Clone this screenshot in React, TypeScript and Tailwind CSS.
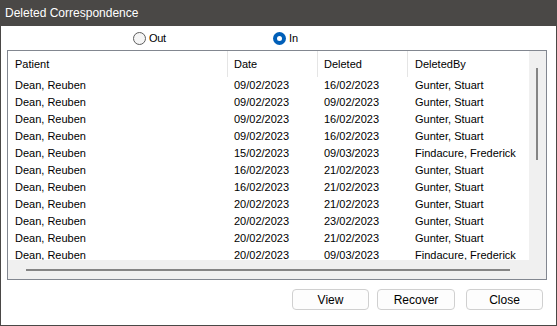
import React from "react";

const rows: [string, string, string, string][] = [
  ["Dean, Reuben", "09/02/2023", "16/02/2023", "Gunter, Stuart"],
  ["Dean, Reuben", "09/02/2023", "09/02/2023", "Gunter, Stuart"],
  ["Dean, Reuben", "09/02/2023", "16/02/2023", "Gunter, Stuart"],
  ["Dean, Reuben", "09/02/2023", "16/02/2023", "Gunter, Stuart"],
  ["Dean, Reuben", "15/02/2023", "09/03/2023", "Findacure, Frederick"],
  ["Dean, Reuben", "16/02/2023", "21/02/2023", "Gunter, Stuart"],
  ["Dean, Reuben", "16/02/2023", "21/02/2023", "Gunter, Stuart"],
  ["Dean, Reuben", "20/02/2023", "21/02/2023", "Gunter, Stuart"],
  ["Dean, Reuben", "20/02/2023", "23/02/2023", "Gunter, Stuart"],
  ["Dean, Reuben", "20/02/2023", "21/02/2023", "Gunter, Stuart"],
  ["Dean, Reuben", "20/02/2023", "09/03/2023", "Findacure, Frederick"],
];

const font = { fontFamily: '"Liberation Sans", Arial, sans-serif' };

export default function App() {
  return (
    <div
      className="w-[557px] h-[326px] bg-[#4a4846] flex flex-col overflow-hidden"
      style={font}
    >
      <div className="h-[26px] pl-[5px] flex items-center text-white text-[12px] shrink-0">
        Deleted Correspondence
      </div>
      <div className="flex-1 bg-white ml-[1px] mr-[1px] mb-[1px] flex flex-col text-[11px] text-black">
        {/* radio row */}
        <div className="h-[24px] flex items-center pl-[132px] shrink-0">
          <div className="w-[140px] flex items-center gap-[3px]">
            <span className="w-[13px] h-[13px] rounded-full border border-[#5d5d5d] bg-[#f5f5f5] box-border" />
            <span className="tracking-[-0.3px]">Out</span>
          </div>
          <div className="flex items-center gap-[3px]">
            <span className="w-[13px] h-[13px] rounded-full bg-[#005fb8] flex items-center justify-center">
              <span className="w-[5px] h-[5px] rounded-full bg-white" />
            </span>
            <span>In</span>
          </div>
        </div>
        {/* list box */}
        <div className="ml-[6px] w-[540px] h-[230px] border border-[#828790] flex flex-col shrink-0">
          <div className="h-[209px] flex">
            <div className="w-[521px] overflow-hidden">
              <div className="h-[26px] flex items-center">
                <div className="w-[220px] pl-[7px] h-full flex items-center border-r border-[#e5e5e5]">Patient</div>
                <div className="w-[90px] pl-[6px] h-full flex items-center border-r border-[#e5e5e5]">Date</div>
                <div className="w-[90px] pl-[6px] h-full flex items-center border-r border-[#e5e5e5]">Deleted</div>
                <div className="flex-1 pl-[7px] h-full flex items-center">DeletedBy</div>
              </div>
              {rows.map((r, i) => (
                <div key={i} className="h-[17px] flex items-center">
                  <div className="w-[220px] pl-[7px]">{r[0]}</div>
                  <div className="w-[90px] pl-[6px]">{r[1]}</div>
                  <div className="w-[90px] pl-[6px]">{r[2]}</div>
                  <div className="flex-1 pl-[7px] whitespace-nowrap">{r[3]}</div>
                </div>
              ))}
            </div>
            <div className="w-[17px] bg-[#f0f0f0] flex justify-center pt-[17px]">
              <div className="w-[2px] h-[92px] bg-[#858585] ml-[-1px]" />
            </div>
          </div>
          <div className="h-[19px] bg-[#f0f0f0] flex items-center pl-[18px]">
            <div className="h-[2px] w-[484px] bg-[#858585]" />
          </div>
        </div>
        {/* buttons */}
        <div className="flex mt-[9px] pl-[291px] text-[12px]">
          <button className="w-[77px] h-[21px] rounded-[4px] border border-[#d0d0d0] bg-[#fdfdfd] flex items-center justify-center">
            View
          </button>
          <button className="ml-[8px] w-[78px] h-[21px] rounded-[4px] border border-[#d0d0d0] bg-[#fdfdfd] flex items-center justify-center">
            Recover
          </button>
          <button className="ml-[11px] w-[77px] h-[21px] rounded-[4px] border border-[#d0d0d0] bg-[#fdfdfd] flex items-center justify-center">
            Close
          </button>
        </div>
      </div>
    </div>
  );
}
